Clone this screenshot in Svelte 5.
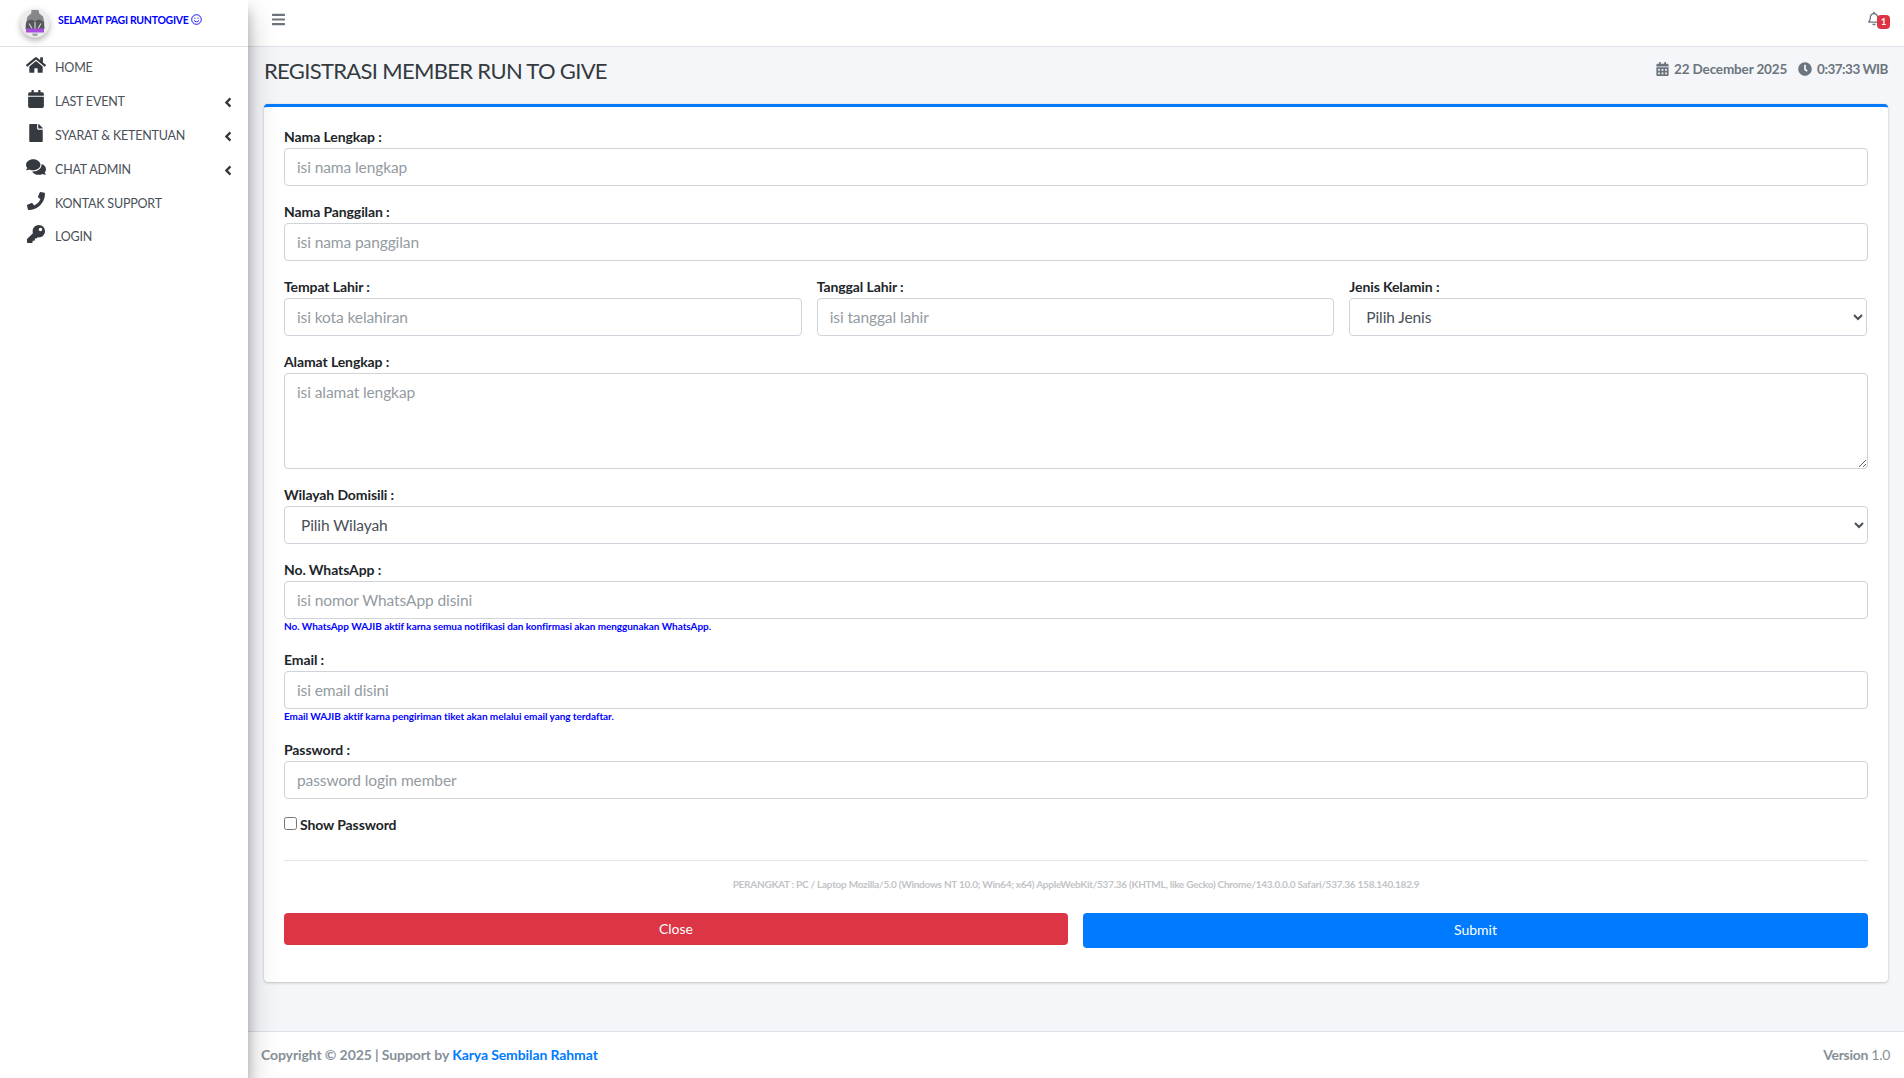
<script>
  const menu = [
    { label: 'HOME', view: '0 0 576 512', d: 'M280.37 148.26L96 300.11V464a16 16 0 0 0 16 16l112.06-.29a16 16 0 0 0 15.92-16V368a16 16 0 0 1 16-16h64a16 16 0 0 1 16 16v95.64a16 16 0 0 0 16 16.05L464 480a16 16 0 0 0 16-16V300L295.67 148.26a12.19 12.19 0 0 0-15.3 0zM571.6 251.47L488 182.56V44.05a12 12 0 0 0-12-12h-56a12 12 0 0 0-12 12v72.61L318.47 43a48 48 0 0 0-61 0L4.34 251.47a12 12 0 0 0-1.6 16.9l25.5 31A12 12 0 0 0 45.15 301l235.22-193.74a12.19 12.19 0 0 1 15.3 0L530.9 301a12 12 0 0 0 16.9-1.6l25.5-31a12 12 0 0 0-1.7-16.93z' },
    { label: 'LAST EVENT', arrow: true, view: '0 0 448 512', d: 'M12 192h424c6.6 0 12 5.4 12 12v260c0 26.5-21.5 48-48 48H48c-26.5 0-48-21.5-48-48V204c0-6.6 5.4-12 12-12zm436-44v-36c0-26.5-21.5-48-48-48h-48V12c0-6.6-5.4-12-12-12h-40c-6.6 0-12 5.4-12 12v52H160V12c0-6.6-5.4-12-12-12h-40c-6.6 0-12 5.4-12 12v52H48C21.5 64 0 85.5 0 112v36c0 6.6 5.4 12 12 12h424c6.6 0 12-5.4 12-12z' },
    { label: 'SYARAT & KETENTUAN', arrow: true, view: '0 0 384 512', d: 'M224 136V0H24C10.7 0 0 10.7 0 24v464c0 13.3 10.7 24 24 24h336c13.3 0 24-10.7 24-24V160H248c-13.2 0-24-10.8-24-24zm160-14.1v6.1H256V0h6.1c6.4 0 12.5 2.5 17 7l97.9 98c4.5 4.5 7 10.6 7 16.9z' },
    { label: 'CHAT ADMIN', arrow: true, view: '0 0 576 512', d: 'M416 192c0-88.4-93.1-160-208-160S0 103.6 0 192c0 34.3 14.1 65.9 38 92-13.4 30.2-35.5 54.2-35.8 54.5-2.2 2.3-2.8 5.7-1.5 8.7S4.8 352 8 352c36.6 0 66.9-12.3 88.7-25 32.2 15.7 70.3 25 111.3 25 114.9 0 208-71.6 208-160zm122 220c23.9-26 38-57.7 38-92 0-66.9-53.5-124.2-129.3-148.1.9 6.6 1.3 13.3 1.3 20.1 0 105.9-107.7 192-240 192-10.8 0-21.3-.8-31.7-1.9C207.8 439.6 281.8 480 368 480c41 0 79.1-9.2 111.3-25 21.8 12.7 52.1 25 88.7 25 3.2 0 6.1-1.9 7.3-4.8 1.3-2.9.7-6.3-1.5-8.7-.3-.3-22.4-24.2-35.8-54.5z' },
    { label: 'KONTAK SUPPORT', view: '0 0 512 512', d: 'M493.4 24.6l-104-24c-11.3-2.6-22.9 3.3-27.5 13.9l-48 112c-4.2 9.8-1.4 21.3 6.9 28l60.6 49.6c-36 76.7-98.9 140.5-177.2 177.2l-49.6-60.6c-6.8-8.3-18.2-11.1-28-6.9l-112 48C3.9 366.5-2 378.1.6 389.4l24 104C27.1 504.2 36.7 512 48 512c256.1 0 464-207.5 464-464 0-11.2-7.7-20.9-18.6-23.4z' },
    { label: 'LOGIN', view: '0 0 512 512', d: 'M512 176.001C512 273.203 433.202 352 336 352c-11.22 0-22.19-1.062-32.827-3.069l-24.012 27.014A23.999 23.999 0 0 1 261.223 384H224v40c0 13.255-10.745 24-24 24h-40v40c0 13.255-10.745 24-24 24H24c-13.255 0-24-10.745-24-24v-78.059c0-6.365 2.529-12.47 7.029-16.971l161.802-161.802C163.108 213.814 160 195.271 160 176 160 78.798 238.797.001 335.999 0 433.488-.001 512 78.511 512 176.001zM336 128c0 26.51 21.49 48 48 48s48-21.49 48-48-21.49-48-48-48-48 21.49-48 48z' }
  ];
  const angle = 'M31.7 239l136-136c9.4-9.4 24.6-9.4 33.9 0l22.6 22.6c9.4 9.4 9.4 24.6 0 33.9L127.9 256l96.4 96.4c9.4 9.4 9.4 24.6 0 33.9L201.7 409c-9.4 9.4-24.6 9.4-33.9 0l-136-136c-9.5-9.4-9.5-24.6-.1-34z';
</script>

<div class="wrapper">
  <aside class="sidebar">
    <div class="brand">
      <svg class="logo" viewBox="0 0 38 38">
        <circle cx="19" cy="19" r="14.500" fill="#ececec" />
        <path d="M15.500 6h7l.8 3.500 3.700 3 1.500 6.500H10l1.500-6.500 3.700-3z" fill="#85878a" />
        <path d="M10 19c3-4 6-4 9-1.500 3-2.500 6-2.500 9 1.500l.5 6h-19z" fill="#54565a" />
        <path d="M13 19.500l3 5M19 18v7M25 19.500l-3 5" stroke="#d5d5d5" stroke-width="1.200" />
        <rect x="10" y="24.500" width="18" height="4" fill="#a550dc" />
        <path d="M16 29.500h6l-1 2.500h-4z" fill="#a0a2a5" />
      </svg>
      <span class="brand-text">SELAMAT PAGI RUNTOGIVE</span>
      <svg class="smile" viewBox="0 0 24 24" fill="none" stroke="#0000ff" stroke-width="2">
        <circle cx="12" cy="12" r="10.500" />
        <path d="M7 14.500c2.500 3.500 7.500 3.500 10 0" stroke-linecap="round" />
        <circle cx="8.500" cy="9" r="1.200" fill="#0000ff" stroke="none" />
        <circle cx="15.500" cy="9" r="1.200" fill="#0000ff" stroke="none" />
      </svg>
    </div>
    <nav class="menu">
      {#each menu as item}
        <a class="menu-item" href="#top">
          <span class="menu-icon"><svg viewBox={item.view}><path d={item.d} /></svg></span>
          <span class="menu-label">{item.label}</span>
          {#if item.arrow}
            <svg class="menu-arrow" viewBox="0 0 256 512"><path d={angle} /></svg>
          {/if}
        </a>
      {/each}
    </nav>
  </aside>

  <div class="main">
    <header class="topbar">
      <svg class="bars" viewBox="0 0 448 512"><path d="M16 132h416c8.837 0 16-7.163 16-16V76c0-8.837-7.163-16-16-16H16C7.163 60 0 67.163 0 76v40c0 8.837 7.163 16 16 16zm0 160h416c8.837 0 16-7.163 16-16v-40c0-8.837-7.163-16-16-16H16c-8.837 0-16 7.163-16 16v40c0 8.837 7.163 16 16 16zm0 160h416c8.837 0 16-7.163 16-16v-40c0-8.837-7.163-16-16-16H16c-8.837 0-16 7.163-16 16v40c0 8.837 7.163 16 16 16z" /></svg>
      <div class="bell">
        <svg viewBox="0 0 448 512"><path d="M439.39 362.29c-19.32-20.76-55.47-51.99-55.47-154.29 0-77.7-54.48-139.9-127.94-155.16V32c0-17.67-14.32-32-31.98-32s-31.98 14.33-31.98 32v20.84C118.56 68.1 64.08 130.3 64.08 208c0 102.3-36.15 133.53-55.47 154.29-6 6.45-8.66 14.16-8.61 21.71.11 16.4 12.98 32 32.1 32h383.8c19.12 0 32-15.6 32.1-32 .05-7.55-2.61-15.27-8.61-21.71zM67.53 368c21.22-27.97 44.42-74.33 44.53-159.42 0-.2-.06-.38-.06-.58 0-61.86 50.14-112 112-112s112 50.14 112 112c0 .2-.06.38-.06.58.11 85.1 23.31 131.46 44.53 159.42H67.53zM224 512c35.32 0 63.97-28.65 63.97-64H160.03c0 35.35 28.65 64 63.97 64z" /></svg>
        <span class="badge">1</span>
      </div>
    </header>

    <main class="content">
      <div class="page-head">
        <h1>REGISTRASI MEMBER RUN TO GIVE</h1>
        <div class="clock">
          <svg viewBox="0 0 448 512"><path d="M0 464c0 26.5 21.5 48 48 48h352c26.500 0 48-21.500 48-48V192H0v272zm320-196c0-6.600 5.400-12 12-12h40c6.600 0 12 5.400 12 12v40c0 6.600-5.400 12-12 12h-40c-6.600 0-12-5.400-12-12v-40zm0 128c0-6.600 5.400-12 12-12h40c6.600 0 12 5.400 12 12v40c0 6.600-5.400 12-12 12h-40c-6.600 0-12-5.400-12-12v-40zM192 268c0-6.600 5.400-12 12-12h40c6.600 0 12 5.400 12 12v40c0 6.600-5.400 12-12 12h-40c-6.600 0-12-5.400-12-12v-40zm0 128c0-6.600 5.400-12 12-12h40c6.600 0 12 5.400 12 12v40c0 6.600-5.400 12-12 12h-40c-6.600 0-12-5.400-12-12v-40zM64 268c0-6.600 5.400-12 12-12h40c6.600 0 12 5.400 12 12v40c0 6.600-5.400 12-12 12H76c-6.600 0-12-5.400-12-12v-40zm0 128c0-6.600 5.400-12 12-12h40c6.600 0 12 5.400 12 12v40c0 6.600-5.400 12-12 12H76c-6.600 0-12-5.400-12-12v-40zM400 64h-48V16c0-8.800-7.200-16-16-16h-32c-8.800 0-16 7.200-16 16v48H160V16c0-8.800-7.200-16-16-16h-32c-8.800 0-16 7.200-16 16v48H48C21.500 64 0 85.500 0 112v48h448v-48c0-26.500-21.500-48-48-48z" /></svg>
          <span>22 December 2025</span>
          <svg class="clock-icon" viewBox="0 0 512 512"><path d="M256,8C119,8,8,119,8,256S119,504,256,504,504,393,504,256,393,8,256,8Zm92.49,313h0l-20,25a16,16,0,0,1-22.49,2.5h0l-67-49.72a40,40,0,0,1-15-31.23V112a16,16,0,0,1,16-16h32a16,16,0,0,1,16,16V256l58,42.5A16,16,0,0,1,348.49,321Z" /></svg>
          <span class="time">0:37:33 WIB</span>
        </div>
      </div>

      <form class="card">
        <div class="field">
          <label for="nama">Nama Lengkap :</label>
          <input id="nama" placeholder="isi nama lengkap" />
        </div>
        <div class="field">
          <label for="panggilan">Nama Panggilan :</label>
          <input id="panggilan" placeholder="isi nama panggilan" />
        </div>
        <div class="cols">
          <div class="field">
            <label for="tempat">Tempat Lahir :</label>
            <input id="tempat" placeholder="isi kota kelahiran" />
          </div>
          <div class="field">
            <label for="tanggal">Tanggal Lahir :</label>
            <input id="tanggal" placeholder="isi tanggal lahir" />
          </div>
          <div class="field">
            <label for="jenis">Jenis Kelamin :</label>
            <select id="jenis"><option>Pilih Jenis</option></select>
          </div>
        </div>
        <div class="field">
          <label for="alamat">Alamat Lengkap :</label>
          <textarea id="alamat" placeholder="isi alamat lengkap"></textarea>
        </div>
        <div class="field">
          <label for="wilayah">Wilayah Domisili :</label>
          <select id="wilayah"><option>Pilih Wilayah</option></select>
        </div>
        <div class="field">
          <label for="wa">No. WhatsApp :</label>
          <input id="wa" placeholder="isi nomor WhatsApp disini" />
          <small>No. WhatsApp WAJIB aktif karna semua notifikasi dan konfirmasi akan menggunakan WhatsApp.</small>
        </div>
        <div class="field">
          <label for="email">Email :</label>
          <input id="email" placeholder="isi email disini" />
          <small>Email WAJIB aktif karna pengiriman tiket akan melalui email yang terdaftar.</small>
        </div>
        <div class="field">
          <label for="password">Password :</label>
          <input id="password" placeholder="password login member" />
        </div>
        <label class="show"><input type="checkbox" />Show Password</label>
        <hr />
        <p class="device">PERANGKAT : PC / Laptop Mozilla/5.0 (Windows NT 10.0; Win64; x64) AppleWebKit/537.36 (KHTML, like Gecko) Chrome/143.0.0.0 Safari/537.36 158.140.182.9</p>
        <div class="actions">
          <button type="button" class="close">Close</button>
          <button type="button" class="submit">Submit</button>
        </div>
      </form>
    </main>

    <footer class="footer">
      <span>Copyright © 2025 | Support by <a href="#top">Karya Sembilan Rahmat</a></span>
      <span class="version"><b>Version</b> 1.0</span>
    </footer>
  </div>
</div>

<style>
  :global(body) {
    margin: 0;
    background: #f4f6f9;
    color: #212529;
    font-family: Lato, "Noto Sans", sans-serif;
    font-size: 16px;
  }
  .wrapper {
    display: flex;
    min-height: 1078px;
  }
  .sidebar {
    width: 248px;
    flex: none;
    background: #fff;
    box-shadow: 0 14px 28px rgba(0, 0, 0, 0.25), 0 10px 10px rgba(0, 0, 0, 0.22);
    position: relative;
    z-index: 2;
  }
  .brand {
    height: 46px;
    border-bottom: 1px solid #dee2e6;
    display: flex;
    align-items: center;
    padding-left: 16px;
  }
  .logo {
    width: 38px;
    height: 38px;
    margin: 0 4px 0 0;
    filter: drop-shadow(0 3px 3px rgba(0, 0, 0, 0.3));
  }
  .brand-text {
    color: #0000ff;
    font-size: 10.5px;
    font-weight: 700;
    letter-spacing: -0.3px;
    margin-bottom: 7px;
  }
  .smile {
    width: 11px;
    height: 11px;
    margin: 0 0 7px 3px;
  }
  .menu {
    padding-top: 3px;
  }
  .menu-item {
    height: 34px;
    display: flex;
    align-items: center;
    padding: 0 16px 0 26px;
    text-decoration: none;
    font-size: 12.5px;
    letter-spacing: -0.2px;
  }
  .menu-item:last-child {
    margin-top: -1px;
  }
  .menu-icon {
    width: 20px;
    height: 18px;
    margin-right: 9px;
    display: flex;
    justify-content: center;
    margin-top: -4px;
  }
  .menu-icon svg {
    height: 18px;
    width: 20px;
    fill: #343a40;
  }
  .menu-label {
    flex: 1;
    color: #495057;
  }
  .menu-arrow {
    width: 8px;
    height: 15px;
    fill: #343a40;
    margin-top: 2px;
  }
  .main {
    flex: 1;
    min-width: 0;
    display: flex;
    flex-direction: column;
  }
  .topbar {
    height: 46px;
    background: #fff;
    border-bottom: 1px solid #dee2e6;
    display: flex;
    align-items: center;
    justify-content: space-between;
    padding: 0 14px 0 24px;
  }
  .bars {
    width: 13px;
    height: 15px;
    fill: #6c757d;
    margin-top: -8px;
  }
  .bell {
    position: relative;
    width: 22px;
    height: 18px;
    margin-top: -6px;
  }
  .bell svg {
    width: 12px;
    height: 15px;
    fill: #6c757d;
    display: block;
  }
  .badge {
    position: absolute;
    right: 0;
    top: 4px;
    width: 13px;
    height: 14px;
    background: #dc3545;
    color: #fff;
    font-size: 9px;
    font-weight: 700;
    border-radius: 4px;
    text-align: center;
    line-height: 14px;
  }
  .content {
    flex: 1;
    padding: 0 16px;
  }
  .page-head {
    height: 57px;
    display: flex;
    align-items: center;
    justify-content: space-between;
    padding-bottom: 11px;
    box-sizing: border-box;
  }
  h1 {
    margin: 0;
    font-size: 22px;
    font-weight: 400;
    letter-spacing: -0.68px;
    color: #343a40;
  }
  .clock {
    display: flex;
    align-items: center;
    color: #6c757d;
    font-weight: 700;
    font-size: 13.5px;
    letter-spacing: -0.15px;
    margin-top: -3px;
  }
  .clock svg {
    width: 13px;
    height: 14px;
    fill: #6c757d;
    margin-right: 5px;
  }
  .clock .clock-icon {
    width: 14px;
    margin-left: 11px;
  }
  .time {
    letter-spacing: -0.5px;
  }
  .card {
    background: #fff;
    border-top: 3px solid #007bff;
    border-radius: 4px;
    box-shadow: 0 0 1px rgba(0, 0, 0, 0.125), 0 1px 3px rgba(0, 0, 0, 0.2);
    padding: 19px 20px 34px;
    height: 878px;
    box-sizing: border-box;
  }
  .field {
    margin-bottom: 15px;
    min-width: 0;
  }
  .field label {
    display: block;
    font-weight: 700;
    font-size: 14px;
    line-height: 22px;
    height: 22px;
    letter-spacing: -0.1px;
    color: #212529;
  }
  input:not([type]),
  select,
  textarea {
    display: block;
    width: 100%;
    height: 38px;
    box-sizing: border-box;
    border: 1px solid #ced4da;
    border-radius: 4px;
    background: #fff;
    padding: 6px 12px;
    font: inherit;
    font-size: 15.5px;
    letter-spacing: -0.1px;
    color: #495057;
  }
  input::placeholder,
  textarea::placeholder {
    color: #939ba2;
    opacity: 1;
  }
  textarea {
    height: 96px;
    resize: vertical;
    padding-top: 9px;
  }
  .cols {
    display: grid;
    grid-template-columns: repeat(3, 1fr);
    gap: 15px;
    padding-right: 1px;
  }
  small {
    display: block;
    color: #0000ff;
    font-size: 10px;
    font-weight: 700;
    line-height: 14px;
    letter-spacing: -0.05px;
    padding-bottom: 1px;
  }
  .show {
    display: flex;
    align-items: center;
    font-weight: 700;
    font-size: 14px;
    letter-spacing: -0.1px;
    height: 22px;
    margin-top: -1px;
  }
  .show input {
    width: 13px;
    height: 13px;
    margin: 0 3px 2px 0;
  }
  hr {
    border: 0;
    border-top: 1px solid #e4e6e8;
    margin: 25px 0 0;
  }
  .device {
    margin: 16px 0 22px;
    text-align: center;
    color: #c1c4c7;
    font-size: 10px;
    font-weight: 700;
    line-height: 14px;
    letter-spacing: -0.26px;
  }
  .actions {
    display: grid;
    grid-template-columns: 784fr 785fr;
    gap: 15px;
    align-items: start;
  }
  button {
    border: 0;
    border-radius: 4px;
    color: #fff;
    font: inherit;
    font-size: 14px;
    padding: 0 0 2px;
  }
  .close {
    background: #dc3545;
    height: 32px;
  }
  .submit {
    background: #007bff;
    height: 35px;
  }
  .footer {
    height: 47px;
    background: #fff;
    border-top: 1px solid #dee2e6;
    display: flex;
    align-items: center;
    justify-content: space-between;
    padding: 0 14px 2px 13px;
    box-sizing: border-box;
    font-size: 14px;
    font-weight: 700;
    letter-spacing: -0.1px;
    color: #869099;
  }
  .footer a {
    color: #007bff;
    text-decoration: none;
  }
  .version {
    font-weight: 400;
    letter-spacing: -0.3px;
  }
</style>
